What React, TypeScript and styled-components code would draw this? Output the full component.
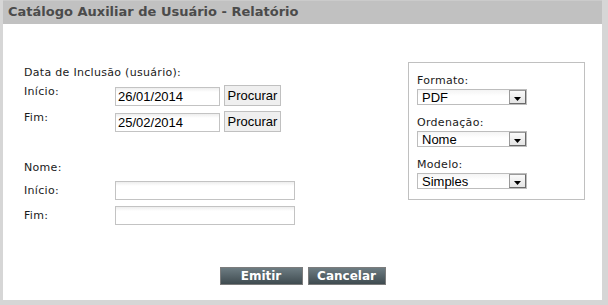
import styled, { createGlobalStyle } from "styled-components";

const GlobalStyle = createGlobalStyle`
  html, body {
    margin: 0;
    padding: 0;
    background: #ffffff;
  }
`;

const Frame = styled.div`
  width: 608px;
  height: 305px;
  box-sizing: border-box;
  background: #d6d6d6;
  padding: 0 6px 5px 3px;
`;

const Panel = styled.div`
  height: 100%;
  background: #ffffff;
  display: flex;
  flex-direction: column;
`;

const TitleBar = styled.div`
  height: 24px;
  background: #c1c1c1;
  border-top: 1px solid #cbcbcb;
  box-sizing: border-box;
  padding-left: 5px;
  font-family: "DejaVu Sans", Verdana, sans-serif;
  font-weight: bold;
  font-size: 13px;
  line-height: 21px;
  color: #4b4b4b;
`;

const Content = styled.div`
  display: flex;
  justify-content: space-between;
  padding: 38px 17px 0 21px;
`;

const LeftColumn = styled.div`
  display: flex;
  flex-direction: column;
  padding-top: 4px;
`;

const Label = styled.div`
  font-family: "DejaVu Sans", Verdana, sans-serif;
  font-size: 11px;
  letter-spacing: 0.3px;
  line-height: 14px;
  color: #1a1a1a;
`;

const GroupTitle = styled(Label)<{ $gap: number }>`
  margin-bottom: ${(p) => p.$gap}px;
`;

const Row = styled.div<{ $height: number; $center?: boolean }>`
  display: flex;
  align-items: ${(p) => (p.$center ? "center" : "flex-start")};
  height: ${(p) => p.$height}px;
`;

const RowLabel = styled(Label)`
  width: 91px;
`;

const TextInput = styled.div<{ $width: number; $top?: number }>`
  width: ${(p) => p.$width}px;
  height: 19px;
  margin-top: ${(p) => p.$top ?? 0}px;
  box-sizing: border-box;
  border: 1px solid #c3c3c3;
  background: linear-gradient(#ededed 0, #ffffff 4px);
  font-family: "Liberation Sans", Arial, sans-serif;
  font-size: 13px;
  line-height: 17px;
  padding-left: 2px;
  color: #000;
`;

const SearchButton = styled.div`
  margin-left: 4px;
  width: 57px;
  height: 21px;
  box-sizing: border-box;
  border: 1px solid #c0c0c0;
  background: #efefef;
  font-family: "Liberation Sans", Arial, sans-serif;
  font-size: 13px;
  line-height: 19px;
  text-align: center;
  color: #000;
`;

const Spacer = styled.div<{ $h: number }>`
  height: ${(p) => p.$h}px;
`;

const OptionsBox = styled.div`
  width: 177px;
  height: 138px;
  box-sizing: border-box;
  border: 1px solid #c0c0c0;
  padding: 9px 8px 0 8px;
  display: flex;
  flex-direction: column;
`;

const OptionLabel = styled(Label)`
  line-height: 17px;
`;

const Select = styled.div`
  width: 110px;
  height: 16px;
  box-sizing: border-box;
  border: 1px solid #bdbdbd;
  background: linear-gradient(#f4f4f4, #ffffff 6px);
  display: flex;
  align-items: center;
  justify-content: space-between;
  margin-bottom: 9px;
  font-family: "Liberation Sans", Arial, sans-serif;
  font-size: 13px;
  color: #000;
  padding-left: 4px;
`;

const Arrow = styled.div`
  width: 17px;
  height: 14px;
  box-sizing: border-box;
  border: 1px solid #6a6a6a;
  border-top-color: #9a9a9a;
  border-left-color: #9a9a9a;
  background: linear-gradient(#fafafa, #e4e4e4);
  display: flex;
  align-items: center;
  justify-content: center;
  padding-top: 3px;
`;

const Footer = styled.div`
  flex: 1;
  display: flex;
  justify-content: center;
  gap: 5px;
  padding-top: 39px;
`;

const ActionButton = styled.div<{ $width: number }>`
  width: ${(p) => p.$width}px;
  height: 18px;
  box-sizing: border-box;
  border: 1px solid #7c7c7c;
  background: linear-gradient(#6d7c82, #3f4b50);
  color: #ffffff;
  font-family: "DejaVu Sans", Verdana, sans-serif;
  font-weight: bold;
  font-size: 12px;
  line-height: 16px;
  text-align: center;
`;

const SelectBox = ({ value }: { value: string }) => (
  <Select>
    <span>{value}</span>
    <Arrow>
      <svg width="7" height="4" viewBox="0 0 7 4">
        <path d="M0 0 H7 L3.5 4 Z" fill="#000" />
      </svg>
    </Arrow>
  </Select>
);

export default function App() {
  return (
    <>
      <GlobalStyle />
      <Frame>
        <Panel>
          <TitleBar>Catálogo Auxiliar de Usuário - Relatório</TitleBar>
          <Content>
            <LeftColumn>
              <GroupTitle $gap={5}>Data de Inclusão (usuário):</GroupTitle>
              <Row $height={26}>
                <RowLabel>Início:</RowLabel>
                <TextInput $width={105} $top={2}>26/01/2014</TextInput>
                <SearchButton>Procurar</SearchButton>
              </Row>
              <Row $height={26}>
                <RowLabel>Fim:</RowLabel>
                <TextInput $width={105} $top={2}>25/02/2014</TextInput>
                <SearchButton>Procurar</SearchButton>
              </Row>
              <Spacer $h={24} />
              <GroupTitle $gap={3}>Nome:</GroupTitle>
              <Row $height={25} $center>
                <RowLabel>Início:</RowLabel>
                <TextInput $width={180} />
              </Row>
              <Row $height={25} $center>
                <RowLabel>Fim:</RowLabel>
                <TextInput $width={180} />
              </Row>
            </LeftColumn>
            <OptionsBox>
              <OptionLabel>Formato:</OptionLabel>
              <SelectBox value="PDF" />
              <OptionLabel>Ordenação:</OptionLabel>
              <SelectBox value="Nome" />
              <OptionLabel>Modelo:</OptionLabel>
              <SelectBox value="Simples" />
            </OptionsBox>
          </Content>
          <Footer>
            <ActionButton $width={83}>Emitir</ActionButton>
            <ActionButton $width={78}>Cancelar</ActionButton>
          </Footer>
        </Panel>
      </Frame>
    </>
  );
}
